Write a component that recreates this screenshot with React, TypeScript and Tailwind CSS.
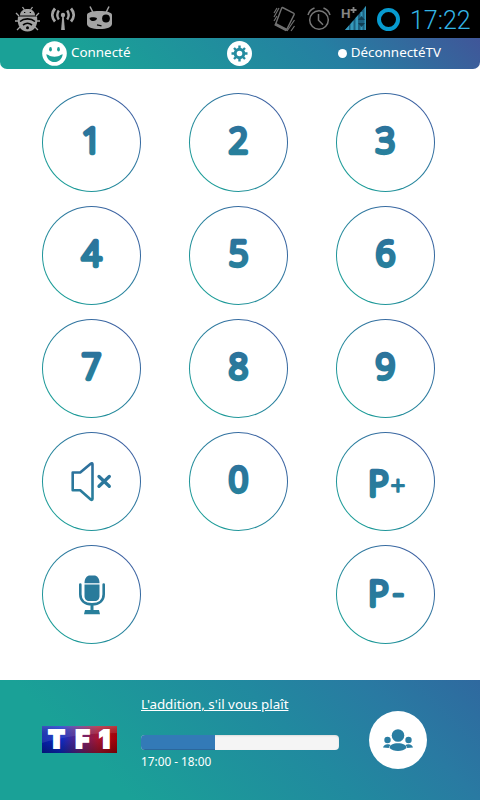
import React from 'react';

const KEYS = ['1', '2', '3', '4', '5', '6', '7', '8', '9', 'mute', '0', 'P+', 'mic', '', 'P-'];

function StatusBar() {
  return (
    <div className="flex h-[38px] items-center justify-between bg-black pl-[15px] pr-[9px]">
      <div className="flex items-center gap-[11px]">
        {/* wifi bug */}
        <svg width="25" height="26" viewBox="0 0 25 26" fill="#a3a3a3">
          <path d="M5 9.500C5 5.500 8 3 12.500 3S20 5.500 20 9.500z" />
          <path d="M3 10.500h19c1.500 9-3 15-9.500 15S1.500 19.500 3 10.500z" />
          <path d="M7.500 1l2 3M17.500 1l-2 3M4 10L1 7M21 10l3-3M3 15H0M22 15h3M5 21l-3 3M20 21l3 3" stroke="#a3a3a3" strokeWidth="1.300" />
          <path d="M5 15.500c4-3.500 11-3.500 15 0M8 19c3-2.300 6-2.300 9 0" fill="none" stroke="#000" strokeWidth="1.600" />
          <circle cx="12.500" cy="21.800" r="1.500" fill="#000" />
          <path d="M9 6.500h1.300M14.700 6.500H16" stroke="#000" strokeWidth="1.200" />
        </svg>
        {/* antenna */}
        <svg width="24" height="26" viewBox="0 0 24 26" fill="none" stroke="#a3a3a3">
          <path d="M4 2.500C.5 6.500 .5 11.500 4 15.500M20 2.500c3.500 4 3.500 9 0 13" strokeWidth="2.800" />
          <path d="M7.800 4.500c-2 3-2 6 0 9M16.200 4.500c2 3 2 6 0 9" strokeWidth="2.400" />
          <circle cx="12" cy="9" r="2.200" fill="#a3a3a3" stroke="none" />
          <path d="M11.300 10h1.400l1.200 14h-3.800z" fill="#a3a3a3" stroke="none" />
        </svg>
        {/* cid */}
        <svg width="27" height="26" viewBox="0 0 27 26">
          <path d="M4 0.500l3 6M23 0.500l-3 6" stroke="#a3a3a3" strokeWidth="1.500" />
          <path d="M1 9c0-2.500 5-4 12.500-4S26 6.500 26 9v8.500c0 4-5 5.500-12.500 5.500S1 21.500 1 17.500z" fill="#a3a3a3" />
          <path d="M3.500 12c1-1 6-1 7.500.300-.5 4-7.500 3.500-7.500-.300z" fill="#000" />
          <circle cx="20" cy="12.500" r="3.900" fill="#000" />
          <path d="M11 18.800l4.500 1" stroke="#000" strokeWidth="1.200" />
        </svg>
      </div>
      <div className="flex items-center">
        {/* vibrate */}
        <svg className="mr-[11px]" width="23" height="26" viewBox="0 0 23 26" fill="none" stroke="#707070">
          <path d="M9.500 1.500l11 5.500c.7.400 1 1 .6 1.700L13.500 24 2.500 18.500l6-16c.2-.7.500-1.200 1-1z" strokeWidth="1.400" />
          <path d="M2 18l11.500 6" strokeWidth="3" />
          <path d="M1 7l3-5M1 11l5-9M1 15l3-5M14 25l7.500-11M18 25l3.500-5" strokeWidth="1.200" />
        </svg>
        {/* alarm */}
        <svg className="mr-[10px]" width="24" height="26" viewBox="0 0 24 26" fill="none" stroke="#777">
          <circle cx="12" cy="14" r="9.300" strokeWidth="1.500" />
          <path d="M11.500 8v6.300l4.500 4.500" strokeWidth="1.500" />
          <path d="M1 9c1-3.500 3-5.700 6.500-7M23 9c-1-3.500-3-5.700-6.500-7" strokeWidth="1.500" />
        </svg>
        {/* mobile signal */}
        <svg className="mr-[10px]" width="26" height="26" viewBox="0 0 26 26">
          <path d="M4 24L25 0v24z" fill="#1c6080" />
          <path d="M4 24l4-4.500V24zM9.500 24v-6l3-3.500V24zM14.500 24V12l2.500-2.800V24zM23.500 24V2L25 0v24z" fill="#3598ba" />
          <path d="M20.500 6v7M20.500 18v6" stroke="#3598ba" strokeWidth="2" />
          <path d="M17 14h7l-3.500-4zM17 17h7l-3.500 4z" fill="#103d52" />
          <path d="M9.500 4H15.500M12.500 1v6" stroke="#858585" strokeWidth="1.800" />
          <text x="0" y="11.500" fontSize="13.500" fontWeight="700" fontFamily="Roboto, sans-serif" fill="#858585">H</text>
        </svg>
        <div className="mr-[10px] size-[23px] rounded-full border-[4px] border-[#079bd0]" />
        <span className="mt-[2px] w-[61px] whitespace-nowrap font-[Roboto,sans-serif] text-[25px] font-light leading-none text-[#33b5e5]">17:22</span>
      </div>
    </div>
  );
}

function Header() {
  return (
    <header className="grid h-[31px] grid-cols-[1fr_26px_1fr] items-center rounded-b-[7px] bg-[linear-gradient(45deg,#1aa197_20%,#257fa2_68%,#405699_100%)] font-['Noto_Sans',sans-serif] text-[13.400px] leading-none text-white">
      <div className="flex items-center gap-[4px] pl-[42px]">
        <svg width="25" height="25" viewBox="0 0 25 25">
          <circle cx="12.500" cy="12.500" r="12.300" fill="#fff" />
          <ellipse cx="8.500" cy="8.300" rx="1.400" ry="2.200" fill="#1ba097" />
          <ellipse cx="16.500" cy="8.300" rx="1.400" ry="2.200" fill="#1ba097" />
          <path d="M4.300 13.200l2.200.800c2 2.200 10 2.200 12 0l2.200-.800c-.6 4.800-3.800 7.800-8.200 7.800s-7.600-3-8.200-7.800z" fill="#1ba097" />
        </svg>
        <span className="pb-[1px]">Connecté</span>
      </div>
      <svg width="25" height="25" viewBox="0 0 25 25">
        <circle cx="12.500" cy="12.500" r="12.500" fill="#fff" />
        <g stroke="#258ca0" strokeWidth="3" fill="none">
          <circle cx="12.500" cy="12.500" r="4.300" />
          <path d="M12.500 7.500v-3M12.500 17.500v3M7.500 12.500h-3M17.500 12.500h3M9 9L7 7M16 16l2 2M16 9l2-2M9 16l-2 2" strokeWidth="2.400" />
        </g>
      </svg>
      <div className="flex items-center justify-end gap-[4px] pr-[39px]">
        <span className="size-[9px] rounded-full bg-white" />
        <span className="pb-[1px]">DéconnectéTV</span>
      </div>
    </header>
  );
}

function MuteIcon() {
  return (
    <svg width="44" height="44" viewBox="0 0 44 44" fill="none" stroke="url(#ink)" strokeLinecap="round" strokeLinejoin="round">
      <path d="M2.700 12.500h7.500L20.700 3.700c1-.8 1.800-.6 1.800.600v34.500c0 1.200-.8 1.400-1.800.600L10.200 30.300H2.700z" strokeWidth="2.600" />
      <path d="M29 16.500l10.300 9.800M39.300 16.500L29 26.300" strokeWidth="3.300" />
    </svg>
  );
}

function MicIcon() {
  return (
    <svg width="44" height="44" viewBox="0 0 44 44">
      <path d="M14.500 10.300C14.500 5 17 2.500 20 2.500h4c3 0 5.500 2.500 5.500 7.800z" fill="#2b789b" />
      <path d="M14.500 11.500h15v11.600c0 3-2 5-4.500 5h-6c-2.500 0-4.500-2-4.500-5z" fill="#297b9b" />
      <path d="M10.300 11.500v9.700c0 6.500 4.700 10 11.700 10s11.700-3.500 11.700-10v-9.700" fill="none" stroke="#297b9b" strokeWidth="2.600" strokeLinecap="round" />
      <path d="M20.500 31h3v6h-3zM15 37h14l1 4.300H14z" fill="#287f9b" />
    </svg>
  );
}

function Glyph({ name }: { name: string }) {
  if (name === 'mute') return <MuteIcon />;
  if (name === 'mic') return <MicIcon />;
  const isProgram = name.length > 1;
  const isPlus = name === 'P+';
  return (
    <svg width="60" height="60" viewBox="0 0 60 60" fill="url(#ink)" stroke="url(#ink)" strokeLinejoin="round" strokeLinecap="round" fontFamily="'Open Sans', sans-serif" fontWeight="300">
      <text x={isProgram ? 22.5 : 29.5} y={isPlus ? 43.5 : isProgram ? 41 : 40} textAnchor="middle" fontSize="34" strokeWidth="4.400">{name[0]}</text>
      {isProgram && (
        <text x={isPlus ? 42 : 42.3} y={isPlus ? 43 : 39.5} textAnchor="middle" fontSize={isPlus ? 25 : 34} strokeWidth={isPlus ? 2.2 : 3.2}>{name[1]}</text>
      )}
    </svg>
  );
}

function Keypad() {
  return (
    <main className="grid grid-cols-[repeat(3,99px)] gap-x-[48px] gap-y-[14px] pl-[42px] pt-[24px]">
      {KEYS.map((key, i) =>
        key ? (
          <button key={i} className="size-[99px] rounded-full bg-[linear-gradient(45deg,#1aa197_10%,#2a7d9e_55%,#3f5ca2_90%)] p-[1.400px]">
            <span className="flex size-full items-center justify-center rounded-full bg-white">
              <Glyph name={key} />
            </span>
          </button>
        ) : (
          <span key={i} />
        )
      )}
    </main>
  );
}

function ChannelLogo() {
  return (
    <svg width="75" height="27" viewBox="0 0 75 27">
      <defs>
        <linearGradient id="logo">
          <stop offset="0" stopColor="#0620a8" />
          <stop offset=".25" stopColor="#0c2bc8" />
          <stop offset=".5" stopColor="#64247e" />
          <stop offset=".75" stopColor="#a9142f" />
          <stop offset="1" stopColor="#a50006" />
        </linearGradient>
        <linearGradient id="shade" x2="0" y2="1">
          <stop offset="0" stopColor="#fff" stopOpacity=".14" />
          <stop offset=".45" stopColor="#000" stopOpacity="0" />
          <stop offset="1" stopColor="#000" stopOpacity=".3" />
        </linearGradient>
      </defs>
      <path d="M0 0h75v27H0z" fill="url(#logo)" />
      <path d="M0 0h75v27H0z" fill="url(#shade)" />
      <path d="M0 0h75v7C45 7 20 11 0 17z" fill="#fff" opacity=".1" />
      <text y="22.300" fontSize="24" fontWeight="900" fontFamily="Inter, sans-serif" fill="#fff" stroke="#fff" strokeWidth="2">
        <tspan x="6.200">T</tspan>
        <tspan x="33.500">F</tspan>
        <tspan x="57">1</tspan>
      </text>
    </svg>
  );
}

function NowPlaying() {
  return (
    <footer className="flex h-[120px] bg-[linear-gradient(45deg,#1aa197_22%,#21899f_60%,#297aa2_80%,#2f699f_100%)] pl-[42px] font-['Noto_Sans',sans-serif] text-white">
      <div className="w-[99px] pt-[46px]">
        <ChannelLogo />
      </div>
      <div className="w-[198px] pt-[14px]">
        <a className="block whitespace-nowrap text-[13.350px] leading-[20px] underline underline-offset-1">L'addition, s'il vous plaît</a>
        <div className="mt-[21px] h-[15px] overflow-hidden rounded-[4px] bg-[#f5f5f5] shadow-[inset_0_1px_2px_rgba(0,0,0,0.1)]">
          <div className="h-full bg-[#337ab7] shadow-[inset_0_-1px_0_rgba(0,0,0,0.15)]" style={{ width: '37.4%' }} />
        </div>
        <p className="mt-[3px] text-[11.800px] leading-[16px]">17:00 - 18:00</p>
      </div>
      <button className="ml-[30px] mt-[31px] flex size-[58px] items-center justify-center rounded-full bg-white">
        <svg width="30" height="24" viewBox="0 0 30 24" fill="#297da2">
          <circle cx="15" cy="7.500" r="6.300" />
          <circle cx="4.500" cy="12" r="3.200" />
          <circle cx="25.500" cy="12" r="3.200" />
          <path d="M6.500 20c0-3 3.500-4.700 8.500-4.700s8.500 1.700 8.500 4.700c-2 2-5 3-8.500 3s-6.500-1-8.500-3z" />
          <path d="M0 19.500c.5-2 2-3.300 4.500-3.300 1.300 0 2.500.400 3.300 1-1.200.700-1.800 1.600-2 2.800zM30 19.500c-.5-2-2-3.300-4.500-3.300-1.300 0-2.500.400-3.300 1 1.200.700 1.800 1.600 2 2.800z" />
        </svg>
      </button>
    </footer>
  );
}

export default function App() {
  return (
    <div className="flex h-[800px] w-[480px] flex-col overflow-hidden bg-white">
      <svg className="absolute" width="0" height="0">
        <defs>
          <linearGradient id="ink" gradientUnits="userSpaceOnUse" x1="0" y1="48" x2="0" y2="5">
            <stop offset="0" stopColor="#26839c" />
            <stop offset="1" stopColor="#2e6f9c" />
          </linearGradient>
        </defs>
      </svg>
      <StatusBar />
      <Header />
      <div className="flex-1">
        <Keypad />
      </div>
      <NowPlaying />
    </div>
  );
}
